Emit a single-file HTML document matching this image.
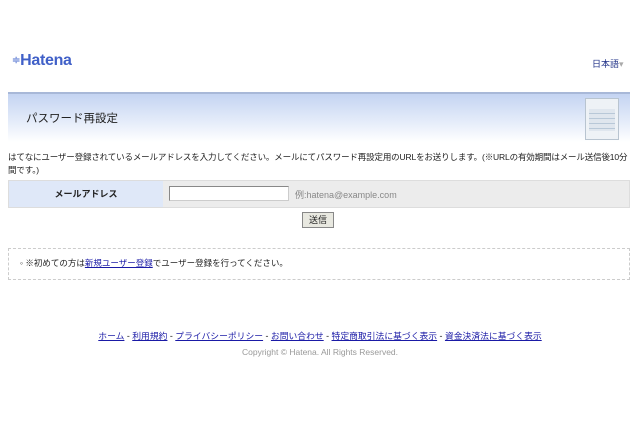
<!DOCTYPE html>
<html><head><meta charset="utf-8"><style>
body{margin:0;background:#fff;width:640px;height:426px;overflow:hidden;font-family:"Liberation Sans","Noto Sans CJK JP",sans-serif;font-size:8px;color:#222;position:relative}
.a{position:absolute}
a{color:#1a1aa6;text-decoration:underline}
</style></head><body>
<div class="a" style="left:12px;top:52px;color:#4060c8;font-weight:bold;font-size:16px;letter-spacing:-0.3px">
<span style="font-size:10px;color:#8aa0e0;vertical-align:2px">≑</span>Hatena</div>
<div class="a" style="left:592px;top:57px;font-size:9px;color:#223388">日本語<span style="color:#aaa">▾</span></div>
<div class="a" style="left:8px;top:92px;width:622px;height:48px;background:linear-gradient(#c4d4f2,#e6edfa 60%,#fff);border-top:2px solid #a8b8d8"></div>
<div class="a" style="left:26px;top:110px;font-size:11.5px;color:#222">パスワード再設定</div>
<div class="a" style="left:585px;top:98px;width:32px;height:40px;background:#eef2f6;border:1px solid #b8c4d0">
<div style="margin:10px 3px 0;height:22px;background:repeating-linear-gradient(#dfe6ee 0 4px,#b8c8d8 4px 5px)"></div></div>
<div class="a" style="left:8px;top:151px;width:625px;line-height:13px;font-size:8.5px;letter-spacing:-0.15px">はてなにユーザー登録されているメールアドレスを入力してください。メールにてパスワード再設定用のURLをお送りします。(※URLの有効期間はメール送信後10分<br>間です。)</div>
<div class="a" style="left:8px;top:180px;width:620px;height:26px;border:1px solid #ddd;background:#ececec"></div>
<div class="a" style="left:9px;top:181px;width:154px;height:26px;background:#dfe8f8;text-align:center;line-height:26px;font-weight:bold;font-size:9px">メールアドレス</div>
<div class="a" style="left:169px;top:186px;width:118px;height:13px;border:1px solid #888;border-right-color:#ccc;border-bottom-color:#ccc;background:#fff"></div>
<div class="a" style="left:295px;top:188px;color:#888;font-size:9px">例:hatena@example.com</div>
<div class="a" style="left:302px;top:212px;width:30px;height:14px;border:1px solid #888;background:#e8e8e0;text-align:center;line-height:14px;font-size:9px">送信</div>
<div class="a" style="left:8px;top:248px;width:620px;height:30px;border:1px dashed #ccc"></div>
<div class="a" style="left:20px;top:257px;font-size:8.5px">◦ ※初めての方は<a>新規ユーザー登録</a>でユーザー登録を行ってください。</div>
<div class="a" style="left:0;top:329px;width:640px;text-align:center;font-size:8.8px"><a>ホーム</a> - <a>利用規約</a> - <a>プライバシーポリシー</a> - <a>お問い合わせ</a> - <a>特定商取引法に基づく表示</a> - <a>資金決済法に基づく表示</a></div>
<div class="a" style="left:0;top:347px;width:640px;text-align:center;font-size:8.5px;color:#999">Copyright © Hatena. All Rights Reserved.</div>
</body></html>
